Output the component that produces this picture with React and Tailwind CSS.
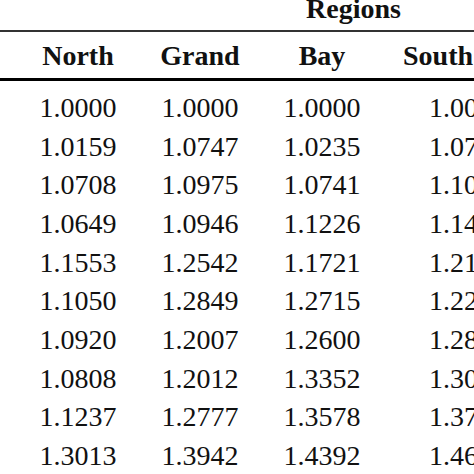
import React from 'react'

const rows = [
  ['1.0000', '1.0000', '1.0000', '1.0000'],
  ['1.0159', '1.0747', '1.0235', '1.0712'],
  ['1.0708', '1.0975', '1.0741', '1.1036'],
  ['1.0649', '1.0946', '1.1226', '1.1458'],
  ['1.1553', '1.2542', '1.1721', '1.2194'],
  ['1.1050', '1.2849', '1.2715', '1.2273'],
  ['1.0920', '1.2007', '1.2600', '1.2861'],
  ['1.0808', '1.2012', '1.3352', '1.3047'],
  ['1.1237', '1.2777', '1.3578', '1.3725'],
  ['1.3013', '1.3942', '1.4392', '1.4618'],
]

const headers = ['North', 'Grand', 'Bay', 'South']

export default function App() {
  return (
    <div className="w-[474px] h-[474px] overflow-hidden bg-white text-[#111] font-['Liberation_Serif',serif] text-[28px]">
      {/* group title */}
      <div className="h-[32px] border-b-2 border-[#333]">
        <div className="pl-[306px] leading-[18px] font-bold whitespace-nowrap">Regions</div>
      </div>

      {/* column headers */}
      <div className="h-[49px] border-b-[3px] border-black pt-[10px] pl-[17px]">
        <div className="grid grid-cols-[122px_122px_122px_122px] leading-[28px] font-bold whitespace-nowrap">
          {headers.map((h, i) => (
            <div key={h} className={i === 3 ? 'pl-[20px]' : 'text-center'}>{h}</div>
          ))}
        </div>
      </div>

      {/* values */}
      <div className="pt-[8px] pl-[17px]">
        {rows.map((r, i) => (
          <div key={i} className="grid grid-cols-[122px_122px_122px_122px] h-[38.67px] leading-[38.67px] whitespace-nowrap">
            {r.map((v, j) => (
              <div key={j} className={j === 3 ? 'pl-[46px]' : 'text-center'}>{v}</div>
            ))}
          </div>
        ))}
      </div>
    </div>
  )
}
